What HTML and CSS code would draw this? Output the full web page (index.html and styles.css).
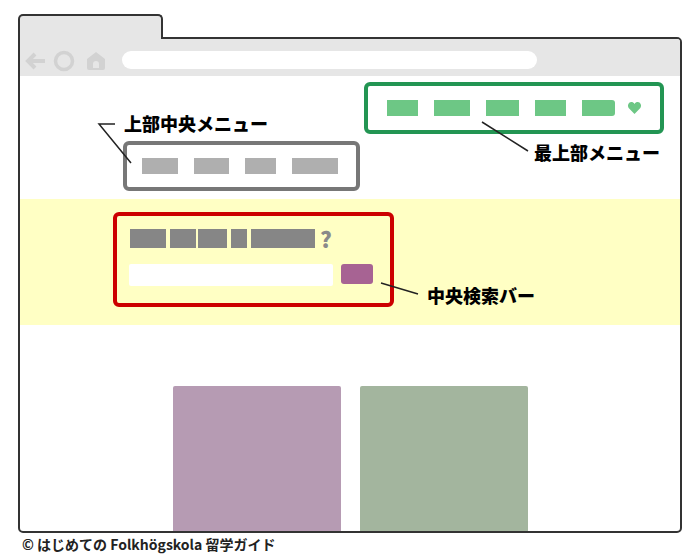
FILE: index.html
```html
<!DOCTYPE html>
<html lang="ja">
<head>
    <meta charset="UTF-8">
    <meta name="viewport" content="width=device-width, initial-scale=1.0">
    <title>Folkhögskola サイト構成</title>
    <link rel="stylesheet" href="styles.css">
</head>
<body>
    <div class="page">
        <div class="browser">
            <div class="tab"></div>
            <div class="window">
                <div class="toolbar">
                    <svg class="nav-icons" width="84" height="22" viewBox="0 0 84 22">
                        <path d="M23 11H6M13 4l-7 7 7 7" fill="none" stroke="#d2d2d2" stroke-width="4"/>
                        <circle cx="42" cy="11" r="8.5" fill="none" stroke="#d2d2d2" stroke-width="3.5"/>
                        <path d="M74 2l9 7v9a2 2 0 0 1-2 2H67a2 2 0 0 1-2-2V9zM71 18v-4a3 3 0 0 1 6 0v4z" fill="#d2d2d2" fill-rule="evenodd"/>
                    </svg>
                    <div class="address"></div>
                </div>

                <div class="top-menu">
                    <span class="item green w31"></span>
                    <span class="item green w36"></span>
                    <span class="item green w33"></span>
                    <span class="item green w31"></span>
                    <span class="item green w33 last"></span>
                    <svg class="heart" width="13" height="12" viewBox="0 0 13 12">
                        <path d="M6.5 12L.9 6.2C-.5 4.600-.2 2 1.200.8 2.900-.5 5.300 0 6.500 2 7.700 0 10.100-.5 11.800.8c1.400 1.200 1.700 3.800.3 5.400z" fill="#6dc785"/>
                    </svg>
                </div>

                <div class="center-menu">
                    <span class="item gray w36"></span>
                    <span class="item gray w35"></span>
                    <span class="item gray w31"></span>
                    <span class="item gray w46"></span>
                </div>

                <div class="band">
                    <div class="search-box">
                        <div class="search-title">
                            <span class="block w36"></span>
                            <span class="block w26"></span>
                            <span class="block w29"></span>
                            <span class="block w16"></span>
                            <span class="block w64"></span>
                            <span class="question">?</span>
                        </div>
                        <div class="search-row">
                            <div class="search-input"></div>
                            <div class="search-button"></div>
                        </div>
                    </div>
                </div>

                <div class="cards">
                    <div class="card purple"></div>
                    <div class="card sage"></div>
                </div>
            </div>
        </div>

        <div class="footer">© はじめての Folkhögskola 留学ガイド</div>

        <!-- annotations -->
        <svg class="leaders" width="700" height="560" viewBox="0 0 700 560">
            <path d="M115 124H99L131 163M482 122L528 151M381 283L418 294" fill="none" stroke="#222" stroke-width="1.500"/>
        </svg>
        <div class="label label-center">上部中央メニュー</div>
        <div class="label label-top">最上部メニュー</div>
        <div class="label label-search">中央検索バー</div>
    </div>
</body>
</html>
```

FILE: styles.css
```css
* {
    margin: 0;
    padding: 0;
    box-sizing: border-box;
}

body {
    background: #fff;
    font-family: "Noto Sans CJK JP", "Noto Sans", sans-serif;
}

.page {
    position: relative;
    width: 700px;
    height: 560px;
    overflow: hidden;
    padding: 14px 18px 0;
}

.browser {
    width: 664px;
}

.tab {
    position: relative;
    z-index: 1;
    width: 145px;
    height: 25px;
    background: #e6e6e6;
    border: 2px solid #333;
    border-bottom: none;
    border-radius: 5px 5px 0 0;
}

.window {
    height: 496px;
    margin-top: -2px;
    border: 2px solid #333;
    border-radius: 0 5px 5px 5px;
    overflow: hidden;
}

.toolbar {
    display: flex;
    align-items: flex-start;
    height: 37px;
    padding-top: 12px;
    background: #e6e6e6;
}

.nav-icons {
    margin: -1px 0 0 2px;
    flex: none;
}

.address {
    width: 415px;
    height: 18px;
    margin-left: 16px;
    background: #fff;
    border-radius: 9px;
}

.item {
    display: block;
    height: 16px;
}

.green {
    background: #6dc785;
}

.last {
    border-radius: 0 3px 3px 0;
}

.gray {
    background: #afafaf;
}

.w16 { width: 16px; }
.w26 { width: 26px; }
.w29 { width: 29px; }
.w31 { width: 31px; }
.w33 { width: 33px; }
.w35 { width: 35px; }
.w36 { width: 36px; }
.w46 { width: 46px; }
.w64 { width: 64px; }

.top-menu {
    display: flex;
    align-items: center;
    gap: 16px;
    width: 300px;
    height: 52px;
    margin: 6px 0 0 344px;
    padding-left: 19px;
    border: 4px solid #239553;
    border-radius: 6px;
}

.heart {
    margin-left: -3px;
}

.center-menu {
    display: flex;
    align-items: center;
    gap: 16px;
    width: 237px;
    height: 50px;
    margin: 7px 0 0 103px;
    padding-left: 15px;
    border: 4px solid #777;
    border-radius: 6px;
}

.band {
    height: 126px;
    margin-top: 8px;
    padding: 13px 0 0 93px;
    background: #ffffc4;
}

.search-box {
    width: 281px;
    height: 95px;
    padding: 13px 0 0 13px;
    border: 4px solid #cc0000;
    border-radius: 6px;
}

.search-title {
    display: flex;
    align-items: center;
    gap: 4px;
    height: 19px;
}

.block {
    display: block;
    height: 19px;
    background: #868686;
}

.w26 + .w29 {
    margin-left: -2px;
}

.question {
    margin-left: 1px;
    color: #8a8a8a;
    font-size: 22px;
    font-weight: 900;
    line-height: 19px;
}

.search-row {
    display: flex;
    align-items: flex-start;
    gap: 8px;
    margin: 16px 0 0 -1px;
}

.search-input {
    width: 204px;
    height: 22px;
    background: #fff;
    border-radius: 2px;
}

.search-button {
    width: 32px;
    height: 20px;
    background: #a76393;
    border-radius: 3px;
}

.cards {
    display: flex;
    gap: 19px;
    margin-top: 61px;
    padding-left: 153px;
}

.card {
    width: 168px;
    height: 145px;
    border-radius: 2px 2px 0 0;
}

.purple {
    background: #b69bb3;
}

.sage {
    background: #a3b59e;
}

.footer {
    margin: 2px 0 0 4px;
    color: #222;
    font-size: 14px;
    font-weight: 700;
    line-height: 19px;
}

.leaders {
    position: absolute;
    left: 0;
    top: 0;
}

.label {
    position: absolute;
    color: #000;
    font-size: 18px;
    font-weight: 900;
    line-height: 24px;
    white-space: nowrap;
}

.label-center {
    left: 124px;
    top: 111px;
}

.label-top {
    left: 534px;
    top: 140px;
}

.label-search {
    left: 427px;
    top: 283px;
}
```
